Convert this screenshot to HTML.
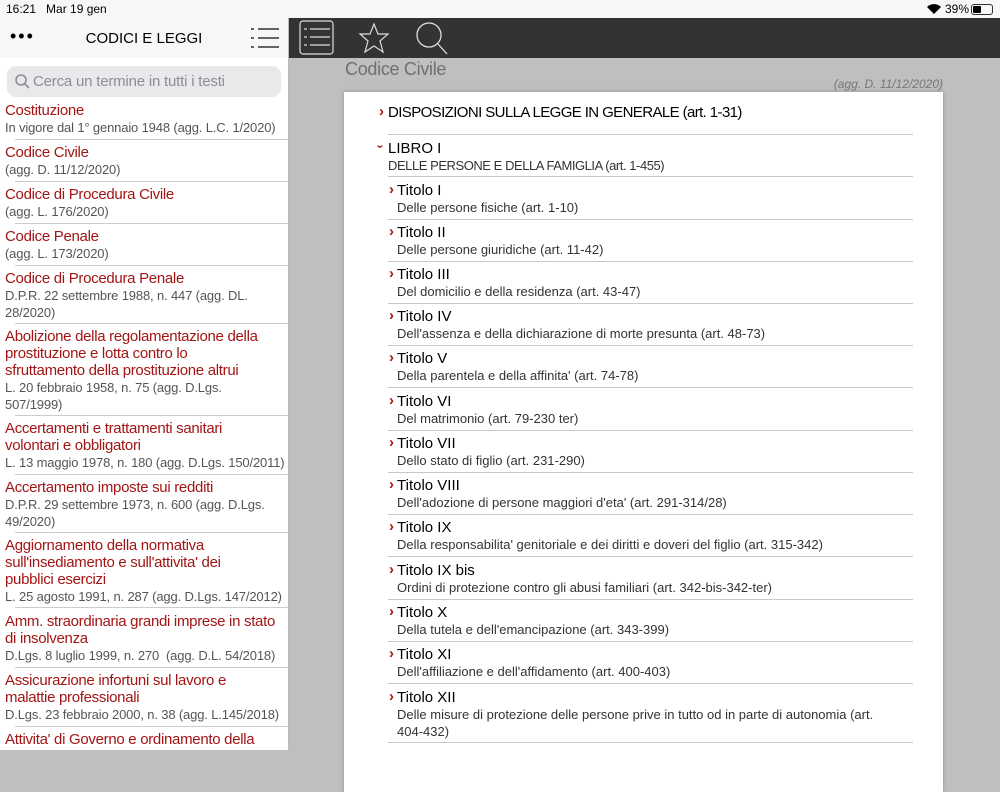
<!DOCTYPE html>
<html><head><meta charset="utf-8"><style>
*{margin:0;padding:0;box-sizing:border-box}
body{width:1000px;height:750px;overflow:hidden;position:relative;font-family:"Liberation Sans",sans-serif;background:#bfbfbf}
.status{position:absolute;left:0;top:0;width:1000px;height:18px;background:#f7f7f7;font-size:12px;color:#000}
.left{position:absolute;left:0;top:18px;width:289px;height:732px;background:#fff;border-right:1px solid #bbb}
.lhead{position:absolute;left:0;top:0;width:288px;height:40px;background:#f7f7f7}
.search{position:absolute;left:7px;top:48px;width:274px;height:31px;background:#e9e9eb;border-radius:9px;color:#8e8e93;font-size:15px;line-height:31px;padding-left:26px;letter-spacing:-0.2px}
.it{position:absolute;left:5px;width:285px;white-space:nowrap}
.it .t{color:#a31515;font-size:15px;line-height:17px;letter-spacing:-0.3px}
.it .s{color:#555;font-size:13px;line-height:17px;letter-spacing:-0.15px}
.sep{position:absolute;left:15px;width:273px;height:1px;background:#ccc}
.topbar{position:absolute;left:289px;top:18px;width:711px;height:40px;background:#333}
.card{position:absolute;left:344px;top:92px;width:599px;height:700px;background:#fff;box-shadow:0 0 4px rgba(0,0,0,.25)}
.r{position:absolute;color:#000}
.r .t{font-size:15px;line-height:17px}
.r .s{font-size:13px;line-height:17px;color:#333}
.ch{position:absolute;color:#a31515;font-size:15px;font-weight:bold;line-height:17px}
.rl{position:absolute;left:44px;width:525px;height:1px;background:#c8c8c8}
</style></head><body>
<div class="status"><span style="position:absolute;left:6px;top:2px">16:21&nbsp;&nbsp;&nbsp;Mar 19 gen</span>
<svg style="position:absolute;left:927px;top:4px" width="14" height="10" viewBox="0 0 14 10"><path d="M7 10L0 3a10 10 0 0 1 14 0z" fill="#000"/></svg>
<span style="position:absolute;left:945px;top:2px">39%</span>
<div style="position:absolute;left:971px;top:4px;width:22px;height:11px;border:1px solid #333;border-radius:3px"><div style="width:8px;height:7px;margin:1px;background:#000;border-radius:1px"></div></div></div>
<div class="left">
<div class="lhead">
<span style="position:absolute;left:10px;top:8px;font-size:18px;letter-spacing:2px">&bull;&bull;&bull;</span>
<span style="position:absolute;left:0;width:288px;text-align:center;top:12px;font-size:15px">CODICI E LEGGI</span>
<svg style="position:absolute;left:250px;top:9px" width="30" height="22" viewBox="0 0 30 22" stroke="#333" stroke-width="1.5"><path d="M1 2h3M8 2h21M1 11h3M8 11h21M1 20h3M8 20h21"/></svg>
</div>
<div class="search"><svg style="position:absolute;left:8px;top:8px" width="15" height="15" viewBox="0 0 15 15" fill="none" stroke="#8e8e93" stroke-width="1.6"><circle cx="6" cy="6" r="5"/><path d="M10 10l4 4"/></svg>Cerca un termine in tutti i testi</div>
</div>
<div style="position:absolute;left:0;top:0;width:288px;height:750px;overflow:hidden">
<div class="it" style="top:102px"><div class="t">Costituzione</div><div class="s">In vigore dal 1° gennaio 1948 (agg. L.C. 1/2020)</div></div><div class="sep" style="top:139px"></div>
<div class="it" style="top:144px"><div class="t">Codice Civile</div><div class="s">(agg. D. 11/12/2020)</div></div><div class="sep" style="top:181px"></div>
<div class="it" style="top:186px"><div class="t">Codice di Procedura Civile</div><div class="s">(agg. L. 176/2020)</div></div><div class="sep" style="top:223px"></div>
<div class="it" style="top:228px"><div class="t">Codice Penale</div><div class="s">(agg. L. 173/2020)</div></div><div class="sep" style="top:265px"></div>
<div class="it" style="top:270px"><div class="t">Codice di Procedura Penale</div><div class="s">D.P.R. 22 settembre 1988, n. 447 (agg. DL.<br>28/2020)</div></div><div class="sep" style="top:323px"></div>
<div class="it" style="top:328px"><div class="t">Abolizione della regolamentazione della<br>prostituzione e lotta contro lo<br>sfruttamento della prostituzione altrui</div><div class="s">L. 20 febbraio 1958, n. 75 (agg. D.Lgs.<br>507/1999)</div></div><div class="sep" style="top:415px"></div>
<div class="it" style="top:420px"><div class="t">Accertamenti e trattamenti sanitari<br>volontari e obbligatori</div><div class="s">L. 13 maggio 1978, n. 180 (agg. D.Lgs. 150/2011)</div></div><div class="sep" style="top:474px"></div>
<div class="it" style="top:479px"><div class="t">Accertamento imposte sui redditi</div><div class="s">D.P.R. 29 settembre 1973, n. 600 (agg. D.Lgs.<br>49/2020)</div></div><div class="sep" style="top:532px"></div>
<div class="it" style="top:537px"><div class="t">Aggiornamento della normativa<br>sull'insediamento e sull'attivita' dei<br>pubblici esercizi</div><div class="s">L. 25 agosto 1991, n. 287 (agg. D.Lgs. 147/2012)</div></div><div class="sep" style="top:607px"></div>
<div class="it" style="top:613px"><div class="t">Amm. straordinaria grandi imprese in stato<br>di insolvenza</div><div class="s">D.Lgs. 8 luglio 1999, n. 270 &nbsp;(agg. D.L. 54/2018)</div></div><div class="sep" style="top:667px"></div>
<div class="it" style="top:672px"><div class="t">Assicurazione infortuni sul lavoro e<br>malattie professionali</div><div class="s">D.Lgs. 23 febbraio 2000, n. 38 (agg. L.145/2018)</div></div><div class="sep" style="top:726px"></div>
<div class="it" style="top:731px"><div class="t">Attivita' di Governo e ordinamento della</div></div>
</div>
<div class="topbar">
<svg style="position:absolute;left:10px;top:2px" width="35" height="35" viewBox="0 0 35 35" fill="none" stroke="#ddd" stroke-width="1.2"><rect x="1" y="1" width="33" height="33" rx="3"/><path d="M5 9h3M11 9h20M5 17h3M11 17h20M5 25h3M11 25h20"/></svg>
<svg style="position:absolute;left:69px;top:4px" width="32" height="32" viewBox="0 0 32 32" fill="none" stroke="#ddd" stroke-width="1.2"><path d="M16 2l4 10h10l-8 7 3 11-9-6-9 6 3-11-8-7h10z"/></svg>
<svg style="position:absolute;left:126px;top:3px" width="34" height="34" viewBox="0 0 34 34" fill="none" stroke="#ddd" stroke-width="1.3"><circle cx="14" cy="14" r="12"/><path d="M23 23l9 10"/></svg>
</div>
<div style="position:absolute;left:345px;top:59px;font-size:18px;color:#707070;letter-spacing:-0.3px">Codice Civile</div>
<div style="position:absolute;right:57px;top:77px;font-size:12px;color:#777;font-style:italic">(agg. D. 11/12/2020)</div>
<div class="card">
<div class="ch" style="left:35px;top:11px">&#8250;</div><div class="r" style="left:44px;top:12px"><div class="t" style="letter-spacing:-0.6px">DISPOSIZIONI SULLA LEGGE IN GENERALE (art. 1-31)</div></div>
<div class="rl" style="top:42px"></div>
<div class="ch" style="left:34px;top:46px;transform:rotate(90deg);font-size:12px">&#8250;</div><div class="r" style="left:44px;top:48px"><div class="t">LIBRO I</div><div class="s" style="letter-spacing:-0.45px">DELLE PERSONE E DELLA FAMIGLIA (art. 1-455)</div></div>
<div class="rl" style="top:84px"></div>
<div class="ch" style="left:45px;top:89px">&#8250;</div><div class="r" style="left:53px;top:90px"><div class="t">Titolo I</div><div class="s">Delle persone fisiche (art. 1-10)</div></div><div class="rl" style="top:127px"></div>
<div class="ch" style="left:45px;top:131px">&#8250;</div><div class="r" style="left:53px;top:132px"><div class="t">Titolo II</div><div class="s">Delle persone giuridiche (art. 11-42)</div></div><div class="rl" style="top:169px"></div>
<div class="ch" style="left:45px;top:173px">&#8250;</div><div class="r" style="left:53px;top:174px"><div class="t">Titolo III</div><div class="s">Del domicilio e della residenza (art. 43-47)</div></div><div class="rl" style="top:211px"></div>
<div class="ch" style="left:45px;top:215px">&#8250;</div><div class="r" style="left:53px;top:216px"><div class="t">Titolo IV</div><div class="s">Dell'assenza e della dichiarazione di morte presunta (art. 48-73)</div></div><div class="rl" style="top:253px"></div>
<div class="ch" style="left:45px;top:257px">&#8250;</div><div class="r" style="left:53px;top:258px"><div class="t">Titolo V</div><div class="s">Della parentela e della affinita' (art. 74-78)</div></div><div class="rl" style="top:295px"></div>
<div class="ch" style="left:45px;top:300px">&#8250;</div><div class="r" style="left:53px;top:301px"><div class="t">Titolo VI</div><div class="s">Del matrimonio (art. 79-230 ter)</div></div><div class="rl" style="top:338px"></div>
<div class="ch" style="left:45px;top:342px">&#8250;</div><div class="r" style="left:53px;top:343px"><div class="t">Titolo VII</div><div class="s">Dello stato di figlio (art. 231-290)</div></div><div class="rl" style="top:380px"></div>
<div class="ch" style="left:45px;top:384px">&#8250;</div><div class="r" style="left:53px;top:385px"><div class="t">Titolo VIII</div><div class="s">Dell'adozione di persone maggiori d'eta' (art. 291-314/28)</div></div><div class="rl" style="top:422px"></div>
<div class="ch" style="left:45px;top:426px">&#8250;</div><div class="r" style="left:53px;top:427px"><div class="t">Titolo IX</div><div class="s">Della responsabilita' genitoriale e dei diritti e doveri del figlio (art. 315-342)</div></div><div class="rl" style="top:464px"></div>
<div class="ch" style="left:45px;top:469px">&#8250;</div><div class="r" style="left:53px;top:470px"><div class="t">Titolo IX bis</div><div class="s">Ordini di protezione contro gli abusi familiari (art. 342-bis-342-ter)</div></div><div class="rl" style="top:507px"></div>
<div class="ch" style="left:45px;top:511px">&#8250;</div><div class="r" style="left:53px;top:512px"><div class="t">Titolo X</div><div class="s">Della tutela e dell'emancipazione (art. 343-399)</div></div><div class="rl" style="top:549px"></div>
<div class="ch" style="left:45px;top:553px">&#8250;</div><div class="r" style="left:53px;top:554px"><div class="t">Titolo XI</div><div class="s">Dell'affiliazione e dell'affidamento (art. 400-403)</div></div><div class="rl" style="top:591px"></div>
<div class="ch" style="left:45px;top:596px">&#8250;</div><div class="r" style="left:53px;top:597px;width:500px"><div class="t">Titolo XII</div><div class="s">Delle misure di protezione delle persone prive in tutto od in parte di autonomia (art. 404-432)</div></div><div class="rl" style="top:650px"></div>
</div>
</body></html>
